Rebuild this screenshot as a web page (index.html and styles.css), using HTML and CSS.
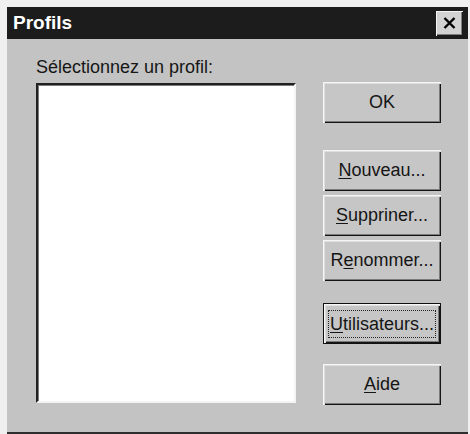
FILE: index.html
```html
<!DOCTYPE html>
<html lang="fr">
<head>
    <meta charset="UTF-8">
    <title>Profils</title>
    <meta name="viewport" content="width=device-width, initial-scale=1.0">
    <link rel="stylesheet" href="styles.css">
</head>
<body>
    <div class="window">

        <div class="title-bar">
            <span class="title">Profils</span>
            <button class="close-btn" aria-label="Fermer">
                <svg width="13" height="12" viewBox="0 0 13 12">
                    <path d="M1.5 1 L11.5 11 M11.5 1 L1.5 11" stroke="#000" stroke-width="2.4" fill="none"/>
                </svg>
            </button>
        </div>

        <div class="dialog-body">
            <div class="profile-col">
                <div class="label">Sélectionnez un profil:</div>
                <div class="list-box"></div>
            </div>

            <div class="button-col">
                <button class="btn btn-ok">OK</button>

                <div class="btn-group">
                    <button class="btn"><u>N</u>ouveau...</button>
                    <button class="btn"><u>S</u>uppriner...</button>
                    <button class="btn">R<u>e</u>nommer...</button>
                </div>

                <button class="btn btn-default"><span class="focus"><u>U</u>tilisateurs...</span></button>
                <button class="btn btn-help"><u>A</u>ide</button>
            </div>
        </div>

    </div>
</body>
</html>
```

FILE: styles.css
```css
body {
    margin: 0;
    background-color: #efefef;
    font-family: "Liberation Sans", Arial, sans-serif;
}

.window {
    margin: 7px 0 0 7px;
    width: 461px;
    height: 425px;
    background-color: #c3c3c3;
    border-bottom: 2px solid #2e2e2e;
    box-sizing: content-box;
}

/* Title bar */
.title-bar {
    height: 32px;
    background-color: #1c1c1c;
    display: flex;
    align-items: center;
    justify-content: space-between;
    padding: 0 5px 0 6px;
}

.title {
    color: #fff;
    font-weight: bold;
    font-size: 19px;
}

.close-btn {
    width: 27px;
    height: 25px;
    padding: 0;
    border: none;
    background-color: #d2d2d2;
    display: flex;
    align-items: center;
    justify-content: center;
    box-shadow: inset 1px 1px #f4f4f4, inset -1px -1px #1a1a1a, inset -2px -2px #7e7e7e;
}

/* Body */
.dialog-body {
    display: flex;
    gap: 27px;
    padding: 18px 0 0 29px;
}

.profile-col {
    display: flex;
    flex-direction: column;
}

.label {
    font-size: 18px;
    line-height: 20px;
    color: #161616;
    margin-bottom: 6px;
}

.list-box {
    width: 256px;
    height: 316px;
    background-color: #fff;
    border: 2px solid;
    border-color: #202020 #f4f4f4 #f4f4f4 #202020;
    box-shadow: inset 1px 1px #7c7c7c;
}

.button-col {
    display: flex;
    flex-direction: column;
    padding-top: 25px;
}

.btn-group {
    display: flex;
    flex-direction: column;
    gap: 4px;
    margin: 27px 0 22px;
}

.btn {
    width: 118px;
    height: 41px;
    padding: 0;
    border: none;
    background-color: #c6c6c6;
    font-family: "Liberation Sans", Arial, sans-serif;
    font-size: 18px;
    color: #151515;
    box-shadow: inset 1px 1px #f6f6f6, inset 2px 2px #dedede, inset -1px -1px #141414, inset -2px -2px #7a7a7a;
}

.btn u {
    text-underline-offset: 2px;
}

.btn-default {
    border: 1px solid #101010;
}

.focus {
    display: inline-block;
    padding: 3px 1px 2px;
    border: 1px dotted #222;
}

.btn-help {
    margin-top: 20px;
}
```
